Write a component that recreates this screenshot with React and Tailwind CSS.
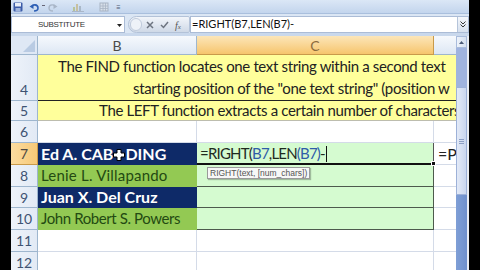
import React from "react";

const F = { fontFamily: "Lato, 'Liberation Sans', sans-serif" };

function Cross() {
  return (
    <svg width="12" height="12" viewBox="0 0 12 12" className="inline-block align-[-1px]">
      <path d="M4 0.5h4v3.5h3.5v4H8v3.5H4V8H0.5V4H4z" fill="#fff" stroke="#000" strokeWidth="1" />
    </svg>
  );
}

function QAT() {
  return (
    <div className="h-[14px] flex items-center bg-gradient-to-b from-[#dbe7f6] to-[#c3d5ed] border-b border-[#a9bfdd] relative">
      <svg width="10" height="10" viewBox="0 0 10 10" className="absolute left-[2px] top-[2px]">
        <rect x="0.5" y="0.5" width="9" height="9" rx="1" fill="#3c5ca8" />
        <rect x="2" y="1" width="6" height="3.5" fill="#e8eef8" />
        <rect x="2.5" y="6" width="5" height="3.5" fill="#9fb4dc" />
      </svg>
      <svg width="11" height="10" viewBox="0 0 11 10" className="absolute left-[18px] top-[2px]">
        <path d="M3 5 C3 2, 9 2, 9 6 C9 8, 7 9, 5 9" fill="none" stroke="#2d5fb4" strokeWidth="1.6" />
        <path d="M0.5 4.5 L4.5 2 L4.5 7 Z" fill="#2d5fb4" />
      </svg>
      <span className="absolute left-[31px] top-[5px] w-[3px] h-[1px] bg-[#667]"></span>
      <svg width="11" height="10" viewBox="0 0 11 10" className="absolute left-[36px] top-[2px]">
        <path d="M8 5 C8 2, 2 2, 2 6 C2 8, 4 9, 6 9" fill="none" stroke="#a9b6c8" strokeWidth="1.4" />
        <path d="M10.5 4.5 L6.5 2 L6.5 7 Z" fill="#a9b6c8" />
      </svg>
      <svg width="14" height="10" viewBox="0 0 14 10" className="absolute left-[60px] top-[2px]">
        <rect x="2" y="5" width="2" height="5" fill="#b7c39a" />
        <rect x="5" y="2" width="2" height="8" fill="#c7c0a0" />
        <rect x="8" y="4" width="2" height="6" fill="#a9b8c8" />
        <rect x="1" y="9" width="12" height="1" fill="#a9b6c8" />
      </svg>
      <svg width="10" height="10" viewBox="0 0 10 10" className="absolute left-[88px] top-[2px]">
        <rect x="1" y="1" width="8" height="8" fill="#d8e0ea" stroke="#a8b4c4" />
        <path d="M1 4h8M1 6.5h8M4 1v8M6.5 1v8" stroke="#a8b4c4" strokeWidth="0.8" />
      </svg>
      <span className="absolute left-[105px] top-[3px] text-[8px] leading-[8px] text-[#4b5a72]" style={F}>≡</span>
    </div>
  );
}

function FormulaBar() {
  return (
    <div className="h-[22px] bg-[#dbe6f4] flex items-start pt-[2px] border-b-[3px] border-[#c9d8ec]">
      <div className="w-[114px] h-[17px] bg-white border border-[#abbcd6] flex items-center relative">
        <span className="ml-[26px] text-[8px] tracking-[-0.3px] text-[#333]" style={{ fontFamily: "'Liberation Sans', sans-serif" }}>SUBSTITUTE</span>
        <svg width="5" height="3" viewBox="0 0 5 3" className="absolute right-[2px] top-[7px]">
          <path d="M0 0h5L2.5 3z" fill="#222" />
        </svg>
      </div>
      <div className="ml-[3px] w-[62px] h-[17px] rounded-l-[9px] rounded-r-[2px] bg-gradient-to-b from-[#f2f5fa] to-[#cfd9e7] border border-[#b3c2d8] flex items-center relative">
        <span className="absolute left-[1px] top-[1px] w-[12px] h-[13px] rounded-full border border-[#c0cbdc] bg-[#eef2f8]"></span>
        <svg width="8" height="8" viewBox="0 0 8 8" className="absolute left-[17px] top-[4px]">
          <path d="M1 1L7 7M7 1L1 7" stroke="#6d7480" strokeWidth="1.5" />
        </svg>
        <svg width="9" height="8" viewBox="0 0 9 8" className="absolute left-[31px] top-[4px]">
          <path d="M1 4L3.5 6.5L8 1" fill="none" stroke="#6d7480" strokeWidth="1.5" />
        </svg>
        <span className="absolute left-[46px] top-[1px] text-[10px] italic text-[#555]" style={{ fontFamily: "'Liberation Serif', serif" }}>
          f<span className="text-[7px]">x</span>
        </span>
      </div>
      <div className="flex-1 h-[17px] bg-white border border-[#abbcd6] flex items-center relative">
        <span className="ml-[1px] text-[11px] text-[#111]" style={F}>=RIGHT(B7,LEN(B7)-</span>
        <div className="absolute right-[0px] top-[0px] w-[11px] h-[15px] bg-gradient-to-b from-[#f4f7fb] to-[#d6e0ee] border-l border-[#b5c4da] flex items-center justify-center">
          <svg width="6" height="7" viewBox="0 0 6 7">
            <path d="M0.5 0.5L3 3L5.5 0.5M0.5 3.5L3 6L5.5 3.5" fill="none" stroke="#333" strokeWidth="1" />
          </svg>
        </div>
      </div>
    </div>
  );
}

const rowH = "border-r border-b border-[#9eb6ce] bg-gradient-to-r from-[#eef3fa] to-[#e2eaf5] text-[#3e5373] text-[14px] flex items-center justify-center";
const cell = "border-r border-b border-[#d4dbe8] bg-white";

function Grid() {
  return (
    <div className="relative grid grid-cols-[27px_159px_237px_22px] grid-rows-[19px_46px_20px_22px_22px_22px_21px_22px_22px_22px] overflow-hidden" style={F}>
      <div className="border-r border-b border-[#9eb6ce] bg-[#dfe8f5] relative">
        <svg width="12" height="12" viewBox="0 0 12 12" className="absolute right-[2px] bottom-[2px]">
          <path d="M12 0V12H0z" fill="#b9cbe3" />
        </svg>
      </div>
      <div className="border-r border-b border-[#9eb6ce] bg-gradient-to-b from-[#f6f9fd] to-[#dde7f4] flex items-center justify-center text-[14px] text-[#4a4a4a]">B</div>
      <div className="border-r border-b border-[#c99a4a] bg-gradient-to-b from-[#fce6b8] to-[#f6c56c] flex items-center justify-center text-[14px] text-[#8b6b3d]">C</div>
      <div className="border-b border-[#9eb6ce] bg-gradient-to-b from-[#f6f9fd] to-[#dde7f4]"></div>

      <div className={rowH + " items-end pb-[0px]"}>4</div>
      <div className="col-span-3 bg-[#ffff9b] border-b border-[#222] overflow-hidden whitespace-nowrap text-[15px] leading-[22px] text-[#222] tracking-[-0.35px]">
        <div className="ml-[20px]">The FIND function locates one text string within a second text</div>
        <div className="ml-[95px]">starting position of the "one text string" (position w</div>
      </div>

      <div className={rowH}>5</div>
      <div className="col-span-3 bg-[#ffff9b] border-b border-[#bdbdae] overflow-hidden whitespace-nowrap text-[15px] leading-[19px] text-[#222] tracking-[-0.35px]">
        <div className="ml-[61px]">The LEFT function extracts a certain number of characters</div>
      </div>

      <div className={rowH}>6</div>
      <div className={cell}></div>
      <div className={cell}></div>
      <div className="border-b border-[#d4dbe8] bg-white"></div>

      <div className="border-r border-b border-[#c99a4a] bg-gradient-to-r from-[#fbdca0] to-[#f7c977] text-[#4e4a44] text-[14px] flex items-center justify-center">7</div>
      <div className="bg-[#0e2a68] border-b border-[#0e2a68] text-white font-bold text-[16px] leading-[21px] pl-[3px] whitespace-nowrap overflow-hidden">
        Ed A. CAB<Cross />DING
      </div>
      <div className="bg-[#d5fbd0] border-r border-[#555] border-b-2 border-b-[#111] text-[15px] leading-[20px] pl-[3px] whitespace-nowrap overflow-visible tracking-[-0.8px] text-[#1f2a1f] relative">
        =RIGHT(<span className="text-[#2f5ca8]">B7</span>,LEN<span className="text-[#2f5ca8]">(B7)</span>-
        <span className="inline-block w-[1px] h-[16px] bg-[#111] align-[-3px] ml-[1px]"></span>
        <span className="absolute right-[-3px] bottom-[-3px] w-[5px] h-[5px] bg-[#111] border border-white"></span>
      </div>
      <div className="border-b border-[#d4dbe8] bg-white text-[16px] leading-[21px] pl-[4px] text-[#222] overflow-hidden whitespace-nowrap">=P</div>

      <div className={rowH}>8</div>
      <div className="bg-[#93c953] border-b border-[#93c953] text-[#234a12] text-[15px] leading-[21px] pl-[3px] whitespace-nowrap overflow-hidden tracking-[0.2px]">Lenie L. Villapando</div>
      <div className="bg-[#d5fbd0] border-r border-b border-[#4d5a4d]"></div>
      <div className="border-b border-[#d4dbe8] bg-white"></div>

      <div className={rowH}>9</div>
      <div className="bg-[#0e2a68] border-b border-[#0e2a68] text-white font-bold text-[16px] leading-[20px] pl-[3px] whitespace-nowrap overflow-hidden">Juan X. Del Cruz</div>
      <div className="bg-[#d5fbd0] border-r border-b border-[#4d5a4d]"></div>
      <div className="border-b border-[#d4dbe8] bg-white"></div>

      <div className={rowH}>10</div>
      <div className="bg-[#93c953] border-b border-[#93c953] text-[#234a12] text-[15px] leading-[21px] pl-[3px] whitespace-nowrap overflow-hidden tracking-[-0.4px]">John Robert S. Powers</div>
      <div className="bg-[#d5fbd0] border-r border-b border-[#4d5a4d]"></div>
      <div className="border-b border-[#d4dbe8] bg-white"></div>

      <div className={rowH}>11</div>
      <div className={cell}></div>
      <div className={cell}></div>
      <div className="border-b border-[#d4dbe8] bg-white"></div>

      <div className={rowH}>12</div>
      <div className={cell}></div>
      <div className={cell}></div>
      <div className="border-b border-[#d4dbe8] bg-white"></div>

      <div className="absolute left-[196px] top-[131px] h-[12px] px-[2px] bg-[#f7f7f7] border border-[#9a9a9a] shadow-[1px_1px_1px_rgba(0,0,0,0.25)] text-[8.5px] leading-[10px] text-[#555] whitespace-nowrap" style={{ fontFamily: "'Liberation Sans', sans-serif" }}>
        RIGHT(text, [num_chars])
      </div>
    </div>
  );
}

function Scrollbar() {
  return (
    <div className="w-[11px] flex flex-col bg-[#8aa5d8]">
      <div className="h-[12px] bg-gradient-to-r from-[#eef3fa] to-[#d5e0f0] border border-[#a9bcdc] flex items-center justify-center">
        <svg width="5" height="3" viewBox="0 0 5 3"><path d="M0 3h5L2.5 0z" fill="#4a5a78" /></svg>
      </div>
      <div className="h-[39px] bg-[#9fb3de]"></div>
      <div className="h-[108px] bg-gradient-to-r from-[#e3eaf7] to-[#c9d6ee] border border-[#9db1d8] flex items-center justify-center">
        <div className="w-[5px] flex flex-col gap-[1px]">
          <div className="h-[1px] bg-[#8c9fc4]"></div>
          <div className="h-[1px] bg-[#8c9fc4]"></div>
          <div className="h-[1px] bg-[#8c9fc4]"></div>
        </div>
      </div>
      <div className="flex-1 bg-gradient-to-r from-[#7f9fd6] to-[#6f90cc]"></div>
    </div>
  );
}

export default function App() {
  return (
    <div className="w-[480px] h-[270px] bg-black flex overflow-hidden">
      <div className="w-[11px] shrink-0 bg-black"></div>
      <div className="w-[458px] shrink-0 flex flex-col">
        <QAT />
        <FormulaBar />
        <div className="flex flex-1 overflow-hidden bg-white">
          <Grid />
          <Scrollbar />
          <div className="w-[2px] bg-[#e8ecf2]"></div>
        </div>
      </div>
      <div className="flex-1 bg-black"></div>
    </div>
  );
}
